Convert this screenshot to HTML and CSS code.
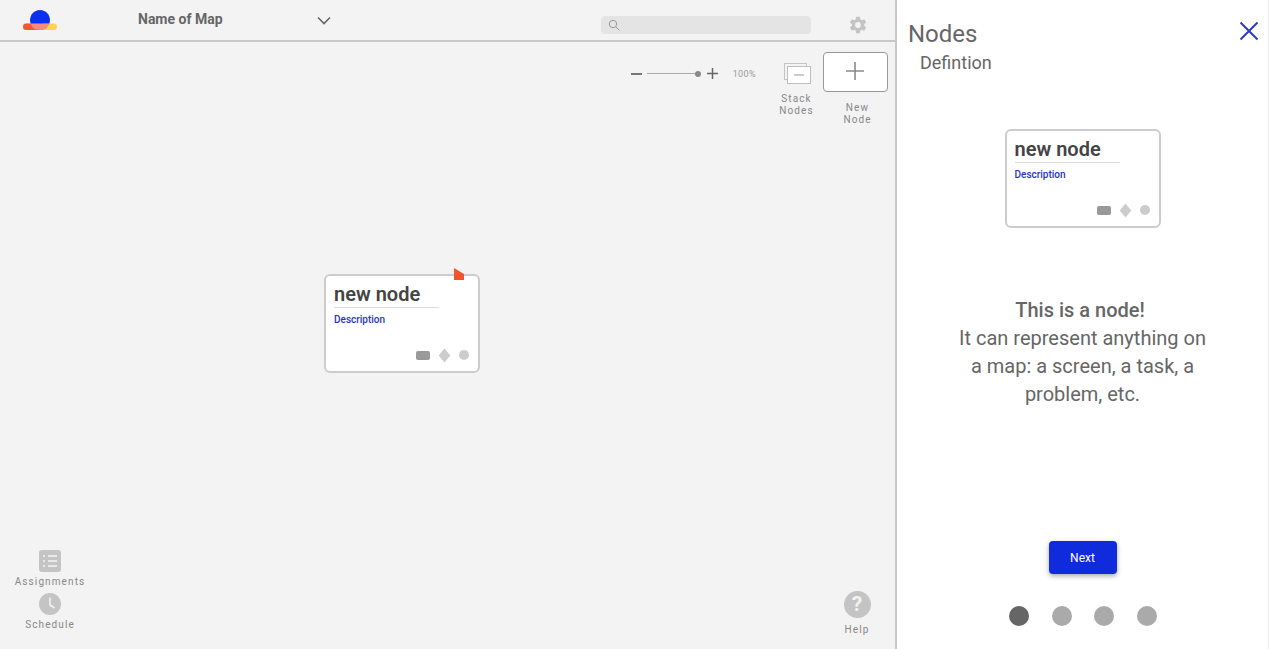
FILE: index.html
```html
<!DOCTYPE html>
<html lang="en">

<head>
    <meta charset="UTF-8">
    <title>Name of Map</title>
    <link rel="stylesheet" href="styles.css">
</head>

<body>
    <div class="app">
        <div class="map">
            <div class="topbar">
                <svg class="logo" width="34" height="20" viewBox="0 0 34 20">
                    <rect x="0" y="13.500" width="34" height="6.500" rx="3.250" fill="#fbd25c" />
                    <path d="M3.250 13.500H20V20H3.250a3.250 3.250 0 0 1 0-6.500z" fill="#f6553a" />
                    <path d="M7.600 13.500h18.800A10 10 0 0 1 24.500 17q-1.500 3-7.500 3t-7.500-3a10 10 0 0 1-1.900-3.500z" fill="#f98a78" />
                    <path d="M7.600 13.500A10 10 0 1 1 26.400 13.500z" fill="#0a32ec" />
                </svg>
                <div class="map-name">Name of Map</div>
                <svg class="chevron" width="14" height="9" viewBox="0 0 14 9">
                    <path d="M1 1.500l6 6 6-6" fill="none" stroke="#666" stroke-width="1.600" />
                </svg>
                <div class="search">
                    <svg width="12" height="12" viewBox="0 0 12 12">
                        <circle cx="5" cy="5" r="3.700" fill="none" stroke="#9a9a9a" />
                        <path d="M7.800 7.800l3.500 3.500" stroke="#9a9a9a" />
                    </svg>
                </div>
                <svg class="gear" width="20" height="20" viewBox="0 0 24 24">
                    <path fill="#c4c4c4" d="M19.400 13a7.500 7.500 0 0 0 0-2l2.400-1.900-2.300-4-2.900 1.200a7.500 7.500 0 0 0-1.700-1L14.300 2H9.700l-.5 3.300a7.500 7.500 0 0 0-1.700 1L4.600 5.100l-2.300 4L4.700 11a7.500 7.500 0 0 0 0 2l-2.400 1.900 2.300 4 2.900-1.200a7.500 7.500 0 0 0 1.700 1l.5 3.300h4.600l.5-3.300a7.500 7.500 0 0 0 1.700-1l2.900 1.200 2.300-4zM12 15.500a3.500 3.500 0 1 1 0-7 3.500 3.500 0 0 1 0 7z" />
                </svg>
            </div>

            <div class="toolbar">
                <div class="zoom">
                    <span class="zoom-minus"></span>
                    <span class="zoom-track"><span class="zoom-knob"></span></span>
                    <svg width="11" height="11" viewBox="0 0 11 11">
                        <path d="M5.500 0v11M0 5.500h11" stroke="#666" stroke-width="1.500" />
                    </svg>
                    <span class="zoom-value">100%</span>
                </div>
                <div class="tool stack-tool">
                    <svg class="stack-icon" width="27" height="21" viewBox="0 0 27 21">
                        <rect x="0.500" y="0.500" width="22" height="16" fill="#f3f3f3" stroke="#c4c4c4" />
                        <rect x="3.500" y="3.500" width="23" height="17" fill="#fff" stroke="#bdbdbd" />
                        <path d="M10 12h10" stroke="#999" />
                    </svg>
                    <div class="tool-label">Stack<br>Nodes</div>
                </div>
                <div class="tool new-tool">
                    <div class="new-box">
                        <svg width="18" height="18" viewBox="0 0 18 18">
                            <path d="M9 0v18M0 9h18" stroke="#8a8a8a" stroke-width="1.600" />
                        </svg>
                    </div>
                    <div class="tool-label">New<br>Node</div>
                </div>
            </div>

            <div class="canvas">
                <div class="node canvas-node">
                    <svg class="node-flag" width="10" height="12" viewBox="0 0 10 12">
                        <path d="M0 0l10 6v6H0z" fill="#f4532f" />
                    </svg>
                    <div class="node-title">new node</div>
                    <div class="node-desc">Description</div>
                    <div class="node-icons">
                        <span class="shape-rect"></span>
                        <span class="shape-diamond"></span>
                        <span class="shape-dot"></span>
                    </div>
                </div>
            </div>

            <div class="bottom">
                <div class="side-tools">
                    <div class="tool">
                        <svg class="side-icon" width="22" height="22" viewBox="0 0 22 22">
                            <rect width="22" height="22" rx="3" fill="#c4c4c4" />
                            <path d="M9 6h9M9 11h9M9 16h9" stroke="#f3f3f3" stroke-width="1.600" />
                            <path d="M4 6h2M4 11h2M4 16h2" stroke="#f3f3f3" stroke-width="1.600" />
                        </svg>
                        <div class="tool-label">Assignments</div>
                    </div>
                    <div class="tool">
                        <svg class="side-icon" width="22" height="22" viewBox="0 0 22 22">
                            <circle cx="11" cy="11" r="11" fill="#c4c4c4" />
                            <path d="M11 4.500V12l4.500 3" fill="none" stroke="#f3f3f3" stroke-width="1.600" />
                        </svg>
                        <div class="tool-label">Schedule</div>
                    </div>
                </div>
                <div class="tool help">
                    <div class="help-icon">?</div>
                    <div class="tool-label">Help</div>
                </div>
            </div>
        </div>

        <div class="panel">
            <div class="panel-head">
                <div>
                    <div class="panel-title">Nodes</div>
                    <div class="panel-sub">Defintion</div>
                </div>
                <svg class="close" width="20" height="20" viewBox="0 0 20 20">
                    <path d="M1.500 1.500l17 17M18.500 1.500l-17 17" stroke="#2a3cc8" stroke-width="2" />
                </svg>
            </div>

            <div class="node panel-node">
                <div class="node-title">new node</div>
                <div class="node-desc">Description</div>
                <div class="node-icons">
                    <span class="shape-rect"></span>
                    <span class="shape-diamond"></span>
                    <span class="shape-dot"></span>
                </div>
            </div>

            <div class="panel-text">
                <strong>This is a node!&nbsp;</strong><br>
                It can represent anything on a map: a screen, a task, a problem, etc.
            </div>

            <button class="next-btn">Next</button>

            <div class="dots">
                <span class="dot dot-on"></span>
                <span class="dot"></span>
                <span class="dot"></span>
                <span class="dot"></span>
            </div>
        </div>
    </div>
</body>

</html>
```

FILE: styles.css
```css
* {
    box-sizing: border-box;
}

html,
body {
    margin: 0;
    height: 100%;
    overflow: hidden;
}

body {
    font-family: Roboto, "Liberation Sans", sans-serif;
    color: #666;
    background-color: #fff;
}

.app {
    display: flex;
    height: 649px;
}

.map {
    width: 897px;
    flex-shrink: 0;
    display: flex;
    flex-direction: column;
    background-color: #f3f3f3;
    border-right: 2px solid #c8c8c8;
}

.topbar {
    height: 42px;
    flex-shrink: 0;
    display: flex;
    align-items: flex-start;
    border-bottom: 2px solid #c8c8c8;
}

.logo {
    margin: 10px 0 0 23px;
}

.map-name {
    margin: 11px 0 0 81px;
    width: 179px;
    font-size: 14px;
    line-height: 16px;
    font-weight: 700;
}

.chevron {
    margin-top: 16px;
}

.search {
    width: 210px;
    height: 18px;
    margin: 16px 0 0 270px;
    padding: 3px 0 0 7px;
    background-color: #e4e4e4;
    border-radius: 4px;
}

.search svg {
    display: block;
}

.gear {
    margin: 15px 0 0 37px;
}

.toolbar {
    height: 90px;
    flex-shrink: 0;
    display: flex;
    align-items: flex-start;
    justify-content: flex-end;
}

.zoom {
    display: flex;
    align-items: center;
    margin-top: 26px;
    height: 11px;
}

.zoom-minus {
    width: 11px;
    height: 2px;
    background-color: #777;
}

.zoom-track {
    position: relative;
    width: 54px;
    height: 1px;
    margin: 0 6px 0 5px;
    background-color: #aaa;
}

.zoom-knob {
    position: absolute;
    right: 0;
    top: -2.500px;
    width: 6px;
    height: 6px;
    border-radius: 50%;
    background-color: #888;
}

.zoom-value {
    margin-left: 15px;
    font-size: 9px;
    letter-spacing: 0.4px;
    color: #999;
}

.tool {
    display: flex;
    flex-direction: column;
    align-items: center;
}

.tool-label {
    font-size: 10px;
    line-height: 12px;
    letter-spacing: 1.100px;
    text-align: center;
    color: #888;
}

.stack-tool {
    width: 53px;
    margin: 21px 0 0 14px;
}

.stack-icon {
    margin-left: 2px;
}

.stack-tool .tool-label {
    margin-top: 9px;
}

.new-tool {
    margin: 10px 7px 0 0;
    width: 65px;
}

.new-tool .tool-label {
    margin-top: 10px;
    padding-left: 4px;
}

.new-box {
    width: 65px;
    height: 40px;
    display: flex;
    align-items: center;
    justify-content: center;
    padding: 0 1px 2px 0;
    background-color: #fff;
    border: 1px solid #999;
    border-radius: 4px;
}

.canvas {
    flex: 1;
    position: relative;
}

.node {
    width: 156px;
    height: 99px;
    padding: 7px 8px 0;
    position: relative;
    background-color: #fff;
    border: 2px solid #ccc;
    border-radius: 6px;
}

.canvas-node {
    position: absolute;
    left: 324px;
    top: 142px;
}

.node-flag {
    position: absolute;
    right: 14px;
    top: -8px;
}

.node-title {
    width: 105px;
    height: 25px;
    font-size: 20px;
    line-height: 23px;
    font-weight: 600;
    color: #444;
    border-bottom: 1px solid #ddd;
}

.node-desc {
    margin-top: 5px;
    font-size: 10px;
    line-height: 13px;
    font-weight: 500;
    color: #1f35c4;
}

.node-icons {
    position: absolute;
    right: 9px;
    bottom: 11px;
    display: flex;
    align-items: center;
}

.shape-rect {
    width: 14px;
    height: 9px;
    border-radius: 2px;
    background-color: #999;
}

.shape-diamond {
    width: 9px;
    height: 9px;
    margin: 0 10px 0 10px;
    background-color: #ccc;
    transform: rotate(45deg) skew(5deg, 5deg);
}

.shape-dot {
    width: 10px;
    height: 10px;
    border-radius: 50%;
    background-color: #ccc;
}

.bottom {
    height: 101px;
    flex-shrink: 0;
    padding-top: 2px;
    display: flex;
    justify-content: space-between;
    align-items: flex-start;
}

.side-tools {
    width: 100px;
    display: flex;
    flex-direction: column;
}

.side-icon {
    margin-bottom: 4px;
}

.side-tools .tool-label {
    height: 17px;
}

.help {
    width: 60px;
    margin: 41px 8px 0 0;
}

.help-icon {
    width: 27px;
    height: 27px;
    border-radius: 50%;
    background-color: #c4c4c4;
    color: #f3f3f3;
    font-size: 21px;
    line-height: 27px;
    font-weight: 700;
    text-align: center;
}

.help .tool-label {
    margin-top: 6px;
}

.panel {
    flex: 1;
    display: flex;
    flex-direction: column;
    align-items: center;
    border-right: 1px solid #eee;
}

.panel-head {
    align-self: stretch;
    display: flex;
    justify-content: space-between;
    align-items: flex-start;
    padding: 20px 9px 0 11px;
}

.panel-title {
    font-size: 24px;
    line-height: 28px;
    color: #666;
}

.panel-sub {
    margin: 2px 0 0 12px;
    font-size: 18px;
    line-height: 25px;
    color: #666;
}

.close {
    margin-top: 1px;
}

.panel-node {
    margin-top: 54px;
    flex-shrink: 0;
}

.panel-text {
    width: 260px;
    margin-top: 68px;
    font-size: 20px;
    line-height: 28px;
    text-align: center;
    color: #666;
}

.panel-text strong {
    font-weight: 500;
}

.next-btn {
    width: 68px;
    height: 33px;
    margin-top: 133px;
    padding: 0;
    border: 0;
    border-radius: 4px;
    font-family: inherit;
    font-size: 12px;
    color: #fff;
    background-color: #0f2bdc;
    box-shadow: 0 2px 5px rgba(0, 0, 0, 0.35);
}

.dots {
    display: flex;
    gap: 22.600px;
    margin-top: 32px;
    padding-left: 1px;
}

.dot {
    width: 20px;
    height: 20px;
    border-radius: 50%;
    background-color: #aaa;
}

.dot-on {
    background-color: #666;
}
```
